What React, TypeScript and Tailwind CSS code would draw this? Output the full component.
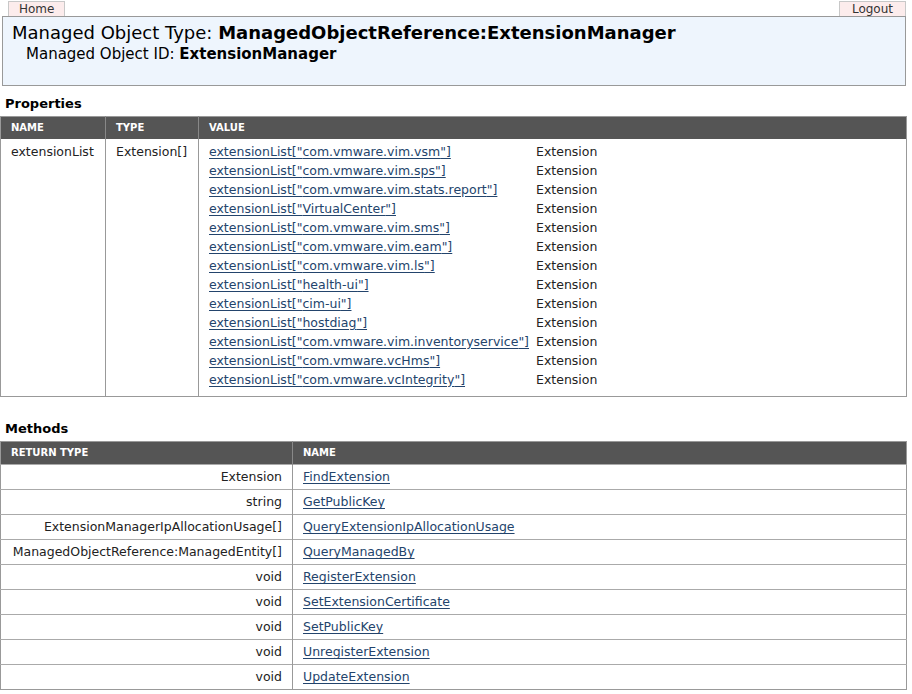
import React from "react";

const extensions = [
  "com.vmware.vim.vsm",
  "com.vmware.vim.sps",
  "com.vmware.vim.stats.report",
  "VirtualCenter",
  "com.vmware.vim.sms",
  "com.vmware.vim.eam",
  "com.vmware.vim.ls",
  "health-ui",
  "cim-ui",
  "hostdiag",
  "com.vmware.vim.inventoryservice",
  "com.vmware.vcHms",
  "com.vmware.vcIntegrity",
];

const methods: [string, string][] = [
  ["Extension", "FindExtension"],
  ["string", "GetPublicKey"],
  ["ExtensionManagerIpAllocationUsage[]", "QueryExtensionIpAllocationUsage"],
  ["ManagedObjectReference:ManagedEntity[]", "QueryManagedBy"],
  ["void", "RegisterExtension"],
  ["void", "SetExtensionCertificate"],
  ["void", "SetPublicKey"],
  ["void", "UnregisterExtension"],
  ["void", "UpdateExtension"],
];

const font = "font-['DejaVu_Sans','Verdana',sans-serif]";
const link = "text-[#23446c] underline underline-offset-2";
const th = "text-[10px] font-bold uppercase text-white px-[10px] h-[22px] align-middle text-left border-l border-[#888] first:border-l-0";

export default function App() {
  return (
    <div className={`${font} w-[907px] text-[12.5px] text-[#222] bg-white min-h-[694px]`}>
      {/* top tabs */}
      <div className="flex justify-between h-[16px] items-end pl-[8px] pr-[1px]">
        <a className="h-[15px] leading-[14px] px-[10px] text-[12px] bg-[#fcecec] border border-b-0 border-[#c8c8c8] text-[#333]">Home</a>
        <a className="h-[15px] leading-[14px] px-[12px] text-[12px] bg-[#fcecec] border border-b-0 border-[#c8c8c8] text-[#333]">Logout</a>
      </div>
      <div className="ml-[2px] mr-[1px] h-[70px] bg-[#eef5fd] border border-[#999] px-[9px] pt-[4px]">
        <div className="text-[18px] leading-[24px] text-black">
          Managed Object Type: <b>ManagedObjectReference:ExtensionManager</b>
        </div>
        <div className="text-[15px] leading-[18px] pl-[14px] text-black">
          Managed Object ID: <b>ExtensionManager</b>
        </div>
      </div>

      <h2 className="font-bold text-[13px] leading-[16px] mt-[10px] ml-[5px] text-black">Properties</h2>
      <table className="mt-[4px] w-full table-fixed border-collapse border border-[#999]">
        <thead>
          <tr className="bg-[#555]">
            <th className={`${th} w-[105px]`}>Name</th>
            <th className={`${th} w-[93px]`}>Type</th>
            <th className={th}>Value</th>
          </tr>
        </thead>
        <tbody>
          <tr>
            <td className="align-top px-[10px] pt-[3px] leading-[19px] border-r border-[#999]">extensionList</td>
            <td className="align-top px-[10px] pt-[3px] leading-[19px] border-r border-[#999]">Extension[]</td>
            <td className="align-top px-[10px] pt-[3px] pb-[7px]">
              <div className="grid grid-cols-[auto_auto] justify-start gap-x-[7px] leading-[19px]">
                {extensions.map((e) => (
                  <React.Fragment key={e}>
                    <a className={link}>extensionList["{e}"]</a>
                    <span>Extension</span>
                  </React.Fragment>
                ))}
              </div>
            </td>
          </tr>
        </tbody>
      </table>

      <h2 className="font-bold text-[13px] leading-[16px] mt-[24px] ml-[5px] text-black">Methods</h2>
      <table className="mt-[4px] w-full table-fixed border-collapse border border-[#999]">
        <thead>
          <tr className="bg-[#555]">
            <th className={`${th} w-[292px] h-[23px]`}>Return Type</th>
            <th className={`${th} h-[23px]`}>Name</th>
          </tr>
        </thead>
        <tbody>
          {methods.map(([r, n]) => (
            <tr key={n} className="h-[25px] border-t border-[#aaa]">
              <td className="text-right px-[10px] pt-[2px] border-r border-[#999] whitespace-nowrap">{r}</td>
              <td className="px-[10px] pt-[2px]">
                <a className={link}>{n}</a>
              </td>
            </tr>
          ))}
        </tbody>
      </table>
    </div>
  );
}
